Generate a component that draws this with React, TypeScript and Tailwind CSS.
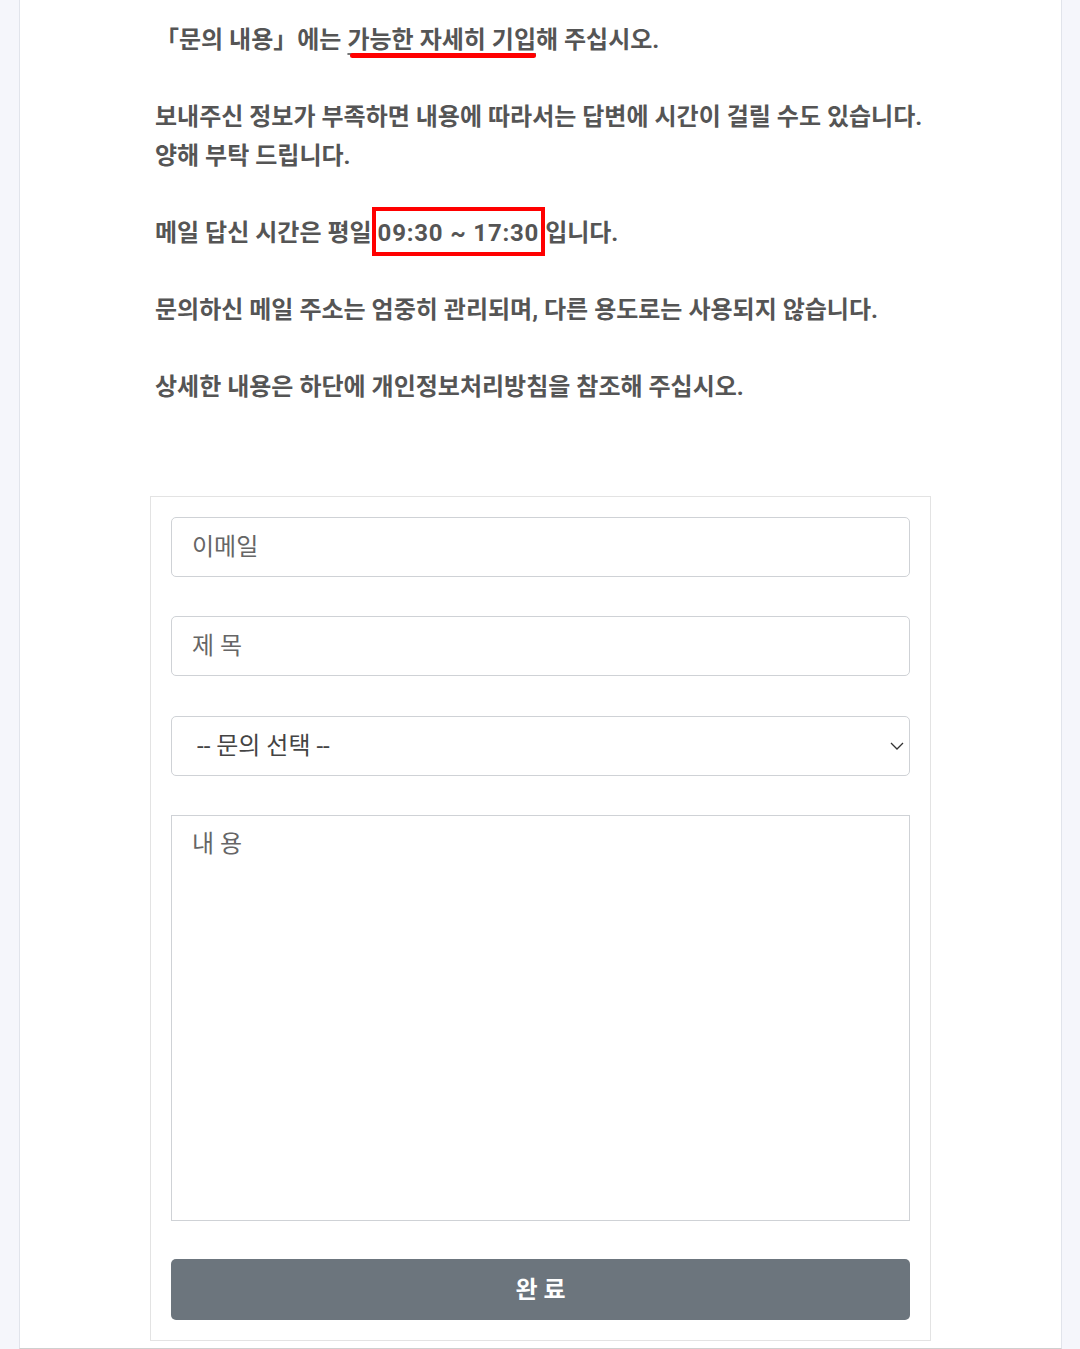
import React from 'react';

// 문의 폼 페이지 (안내문 + 입력 폼)
const font = "font-['Roboto','Noto_Sans_CJK_KR',sans-serif]";

const Notice: React.FC = () => (
  <div className="px-[135px] pt-[21px] text-[24px] font-bold leading-[38.5px] text-[#555] whitespace-nowrap">
    <p className="mb-[38.5px]">
      「문의 내용」에는{' '}
      <span className="relative inline-block underline decoration-[#777] underline-offset-[5px]">
        가능한 자세히 기입
        {/* 빨간 밑줄 표시 */}
        <span className="absolute left-[3px] right-0 bottom-[2px] h-[5px] rounded-full bg-[#ff0000]" />
      </span>
      해 주십시오.
    </p>
    <p className="mb-[38.5px]">
      보내주신 정보가 부족하면 내용에 따라서는 답변에 시간이 걸릴 수도 있습니다.
      <br />
      양해 부탁 드립니다.
    </p>
    <p className="mb-[38.5px]">
      메일 답신 시간은 평일{' '}
      <span className="relative inline-block tracking-[0.8px]">
        09:30 ~ 17:30
        {/* 빨간 박스 표시 */}
        <span className="absolute -left-[6px] -right-[6px] -top-[7px] -bottom-[4px] border-4 border-[#ff0000]" />
      </span>{' '}
      입니다.
    </p>
    <p className="mb-[38.5px]">문의하신 메일 주소는 엄중히 관리되며, 다른 용도로는 사용되지 않습니다.</p>
    <p>상세한 내용은 하단에 개인정보처리방침을 참조해 주십시오.</p>
  </div>
);

const inputCls =
  'block w-full h-[60px] rounded-[5px] border border-[#cfd2d6] bg-white px-[20px] text-[24px] text-[#444] placeholder:text-[#666] outline-none';

const ContactForm: React.FC = () => (
  <form className="mx-auto mt-[90px] w-[781px] border border-[#e3e3e3] p-[20px]" onSubmit={(e) => e.preventDefault()}>
    <input type="email" placeholder="이메일" className={`${inputCls} mb-[39px]`} />
    <input type="text" placeholder="제 목" className={`${inputCls} mb-[40px]`} />
    <div className="relative mb-[39px]">
      <select defaultValue="" className={`${inputCls} appearance-none pl-[25px] text-[#444]`}>
        <option value="">-- 문의 선택 --</option>
        <option value="1">서비스 문의</option>
        <option value="2">기타 문의</option>
      </select>
      <svg
        className="pointer-events-none absolute right-[6px] top-1/2 -translate-y-1/2"
        width="14"
        height="8"
        viewBox="0 0 14 8"
        fill="none"
      >
        <path d="M1 1l6 6 6-6" stroke="#333" strokeWidth="1.3" />
      </svg>
    </div>
    <textarea
      placeholder="내 용"
      className="mb-[38px] block h-[406px] w-full resize-none border border-[#cfd2d6] bg-white px-[20px] pt-[11px] text-[24px] leading-[34px] text-[#444] placeholder:text-[#666] outline-none"
    />
    <button
      type="submit"
      className="block h-[61px] w-full rounded-[5px] bg-[#6c757d] text-[24px] font-bold text-white"
    >
      완 료
    </button>
  </form>
);

export default function App() {
  return (
    <div className={`min-h-screen bg-[#f5f6fb] ${font}`}>
      <div className="ml-[19px] w-[1043px] border-x border-b border-x-[#e1e4eb] border-b-[#cfcfcf] bg-white pb-[7px]">
        <Notice />
        <ContactForm />
      </div>
    </div>
  );
}
